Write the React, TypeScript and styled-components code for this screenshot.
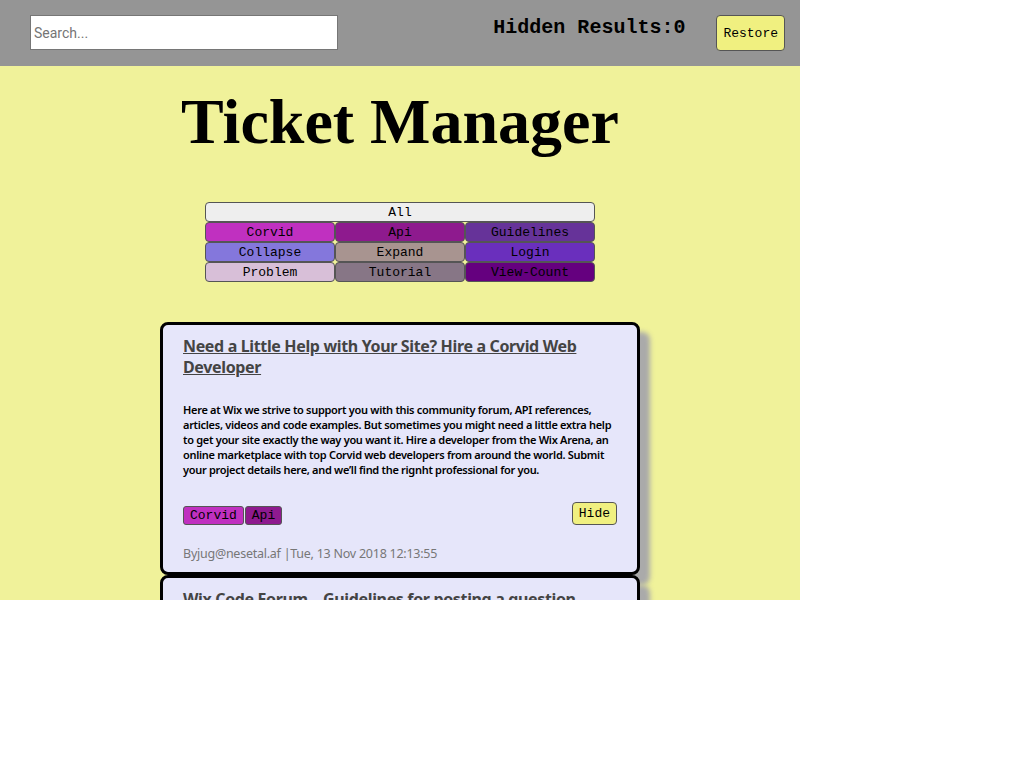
import React from "react";
import styled, { createGlobalStyle } from "styled-components";

const GlobalStyle = createGlobalStyle`
  html, body { margin: 0; padding: 0; background: #ffffff; }
  * { box-sizing: border-box; }
`;

const Page = styled.div`
  width: 800px;
  height: 600px;
  overflow: hidden;
  background: #f0f29a;
  font-family: "Noto Sans", "Open Sans", sans-serif;
`;

const TopBar = styled.header`
  height: 66px;
  background: #959595;
  display: flex;
  align-items: flex-start;
  padding: 15px 15px 0 30px;
`;

const SearchInput = styled.input`
  width: 308px;
  height: 35px;
  border: 1px solid #767676;
  background: #ffffff;
  padding: 0 3px;
  font-family: Roboto, "Liberation Sans", sans-serif;
  font-size: 14px;
  color: #222;
  outline: none;
  &::placeholder { color: #757575; }
`;

const Spacer = styled.div`
  flex: 1;
`;

const HiddenCount = styled.div`
  font-family: "Liberation Mono", "Courier New", monospace;
  font-weight: bold;
  font-size: 20px;
  color: #000;
  margin-top: 1px;
  margin-right: 31px;
`;

const YellowButton = styled.button<{ $h?: number }>`
  background: #f0f080;
  border: 1px solid #555;
  border-radius: 4px;
  font-family: "Liberation Mono", "Courier New", monospace;
  font-size: 13px;
  color: #000;
  height: ${(p) => p.$h ?? 36}px;
  padding: 0 6px;
  cursor: pointer;
`;

const Title = styled.h1`
  margin: 19px 0 0;
  text-align: center;
  font-family: "Liberation Serif", "Times New Roman", serif;
  font-weight: bold;
  font-size: 64px;
  line-height: 74px;
  color: #000;
`;

const FilterGrid = styled.div`
  margin: 43px auto 0;
  width: 390px;
  display: grid;
  grid-template-columns: repeat(3, 130px);
`;

const FilterButton = styled.button<{ $bg: string; $wide?: boolean }>`
  grid-column: ${(p) => (p.$wide ? "1 / span 3" : "auto")};
  height: 20px;
  background: ${(p) => p.$bg};
  border: 1px solid #555;
  border-radius: 4px;
  font-family: "Liberation Mono", "Courier New", monospace;
  font-size: 13px;
  color: #000;
  padding: 0;
  cursor: pointer;
`;

const CardList = styled.div`
  margin: 40px auto 0;
  width: 480px;
  display: flex;
  flex-direction: column;
`;

const Card = styled.article`
  background: #e6e6fa;
  border: 3px solid #000;
  border-radius: 8px;
  box-shadow: 10px 10px 5px #aaaaaa;
  padding: 11px 20px 9px 20px;
`;

const CardTitle = styled.a`
  display: block;
  font-size: 16px;
  font-weight: bold;
  line-height: 21px;
  letter-spacing: -0.35px;
  color: #444;
  text-decoration: underline;
  margin-bottom: 24px;
`;

const CardBody = styled.p`
  margin: 0 0 25px;
  font-size: 11px;
  font-weight: 600;
  line-height: 15px;
  letter-spacing: -0.3px;
  color: #000;
`;

const CardActions = styled.div`
  display: flex;
  align-items: flex-end;
  justify-content: space-between;
`;

const TagRow = styled.div`
  display: flex;
  gap: 1px;
`;

const Tag = styled.span<{ $bg: string }>`
  display: inline-block;
  height: 19px;
  line-height: 17px;
  padding: 0 6px;
  background: ${(p) => p.$bg};
  border: 1px solid #555;
  border-radius: 3px;
  font-family: "Liberation Mono", "Courier New", monospace;
  font-size: 13px;
  color: #000;
`;

const CardMeta = styled.div`
  margin-top: 20px;
  font-size: 12.5px;
  letter-spacing: -0.25px;
  color: #777;
  line-height: 18px;
`;

const filters: { label: string; bg: string }[] = [
  { label: "Corvid", bg: "#c030c0" },
  { label: "Api", bg: "#8e1a8e" },
  { label: "Guidelines", bg: "#663399" },
  { label: "Collapse", bg: "#8477dc" },
  { label: "Expand", bg: "#a89490" },
  { label: "Login", bg: "#6a2fbd" },
  { label: "Problem", bg: "#d8bfd8" },
  { label: "Tutorial", bg: "#877686" },
  { label: "View-Count", bg: "#65007f" },
];

const tagColor = (name: string) => filters.find((f) => f.label === name)?.bg ?? "#ccc";

const tickets = [
  {
    title: "Need a Little Help with Your Site? Hire a Corvid Web Developer",
    body:
      "Here at Wix we strive to support you with this community forum, API references, articles, videos and code examples. But sometimes you might need a little extra help to get your site exactly the way you want it. Hire a developer from the Wix Arena, an online marketplace with top Corvid web developers from around the world. Submit your project details here, and we\u2019ll find the rignht professional for you.",
    tags: ["Corvid", "Api"],
    author: "jug@nesetal.af",
    date: "Tue, 13 Nov 2018 12:13:55",
  },
  {
    title: "Wix Code Forum \u2013 Guidelines for posting a question",
    body:
      "Welcome to the Wix Code Forum! Please read these guidelines before posting a question so that the community can help you as quickly as possible.",
    tags: ["Guidelines"],
    author: "admin@wix.com",
    date: "Mon, 12 Nov 2018 09:40:12",
  },
];

export default function App() {
  return (
    <>
      <GlobalStyle />
      <Page>
        <TopBar>
          <SearchInput placeholder="Search..." />
          <Spacer />
          <HiddenCount>Hidden Results:0</HiddenCount>
          <YellowButton>Restore</YellowButton>
        </TopBar>
        <Title>Ticket Manager</Title>
        <FilterGrid>
          <FilterButton $bg="#eeeeee" $wide>
            All
          </FilterButton>
          {filters.map((f) => (
            <FilterButton key={f.label} $bg={f.bg}>
              {f.label}
            </FilterButton>
          ))}
        </FilterGrid>
        <CardList>
          {tickets.map((t) => (
            <Card key={t.title}>
              <CardTitle href="#">{t.title}</CardTitle>
              <CardBody>{t.body}</CardBody>
              <CardActions>
                <TagRow>
                  {t.tags.map((tag) => (
                    <Tag key={tag} $bg={tagColor(tag)}>
                      {tag}
                    </Tag>
                  ))}
                </TagRow>
                <YellowButton $h={23}>Hide</YellowButton>
              </CardActions>
              <CardMeta>
                By{t.author} |{t.date}
              </CardMeta>
            </Card>
          ))}
        </CardList>
      </Page>
    </>
  );
}
